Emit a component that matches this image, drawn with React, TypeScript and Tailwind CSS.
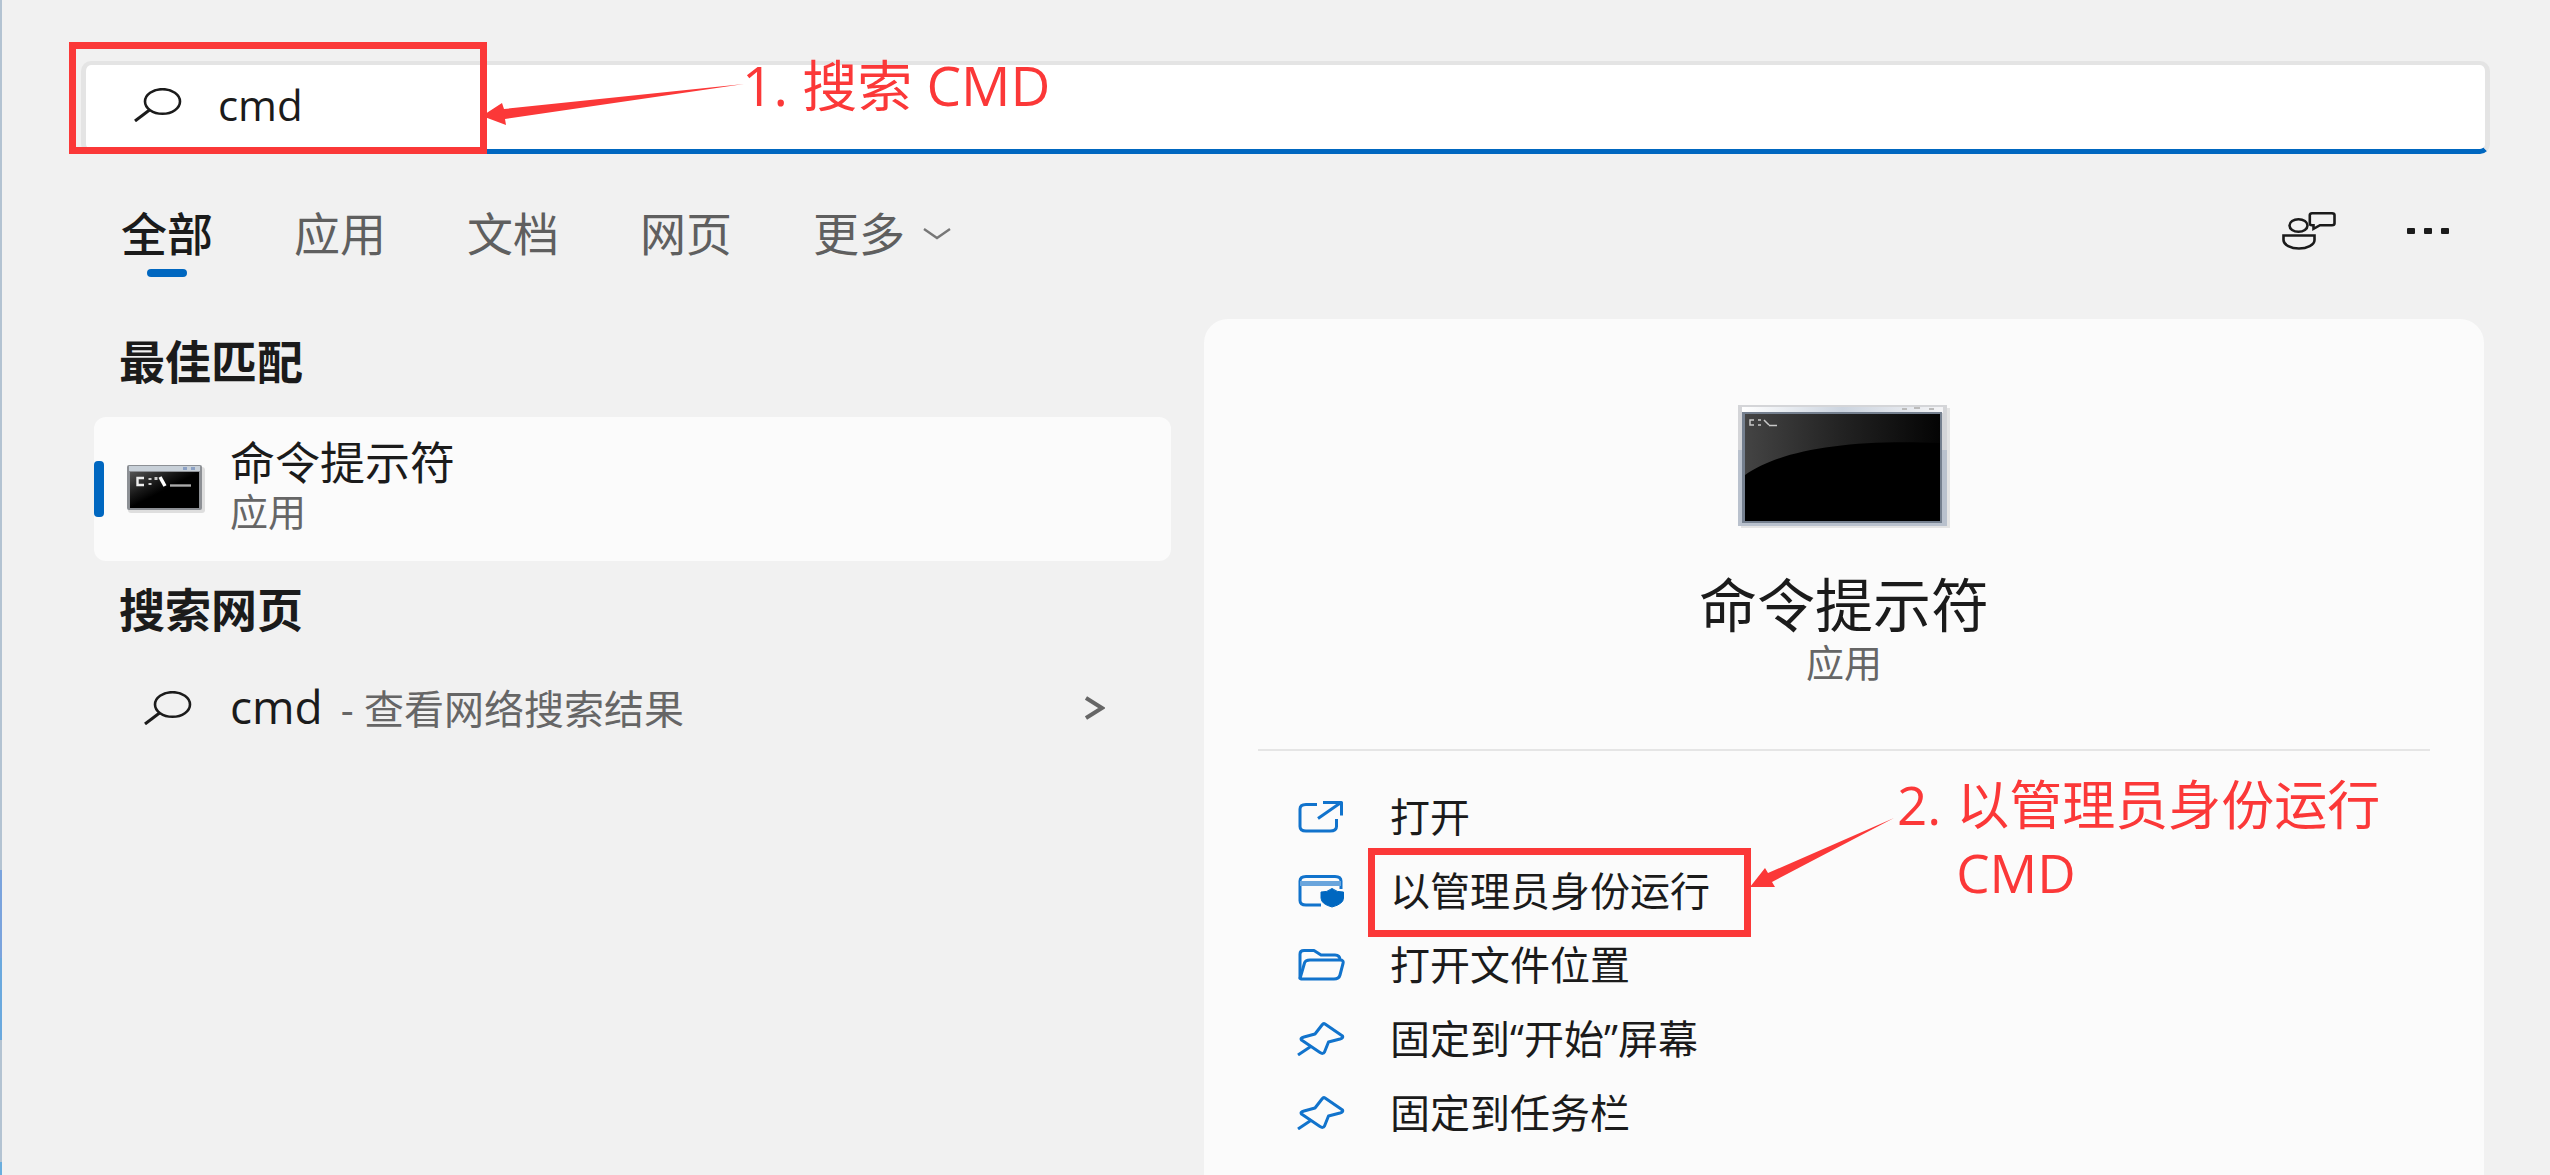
import type { ReactNode } from "react";

function SearchIcon() {
  return (
    <svg className="h-[34px] w-[48px] shrink-0" viewBox="0 0 48 34" fill="none" stroke="#1b1b1b" aria-hidden="true">
      <ellipse cx="28.5" cy="13.5" rx="17.5" ry="12.3" strokeWidth="2.6" />
      <path d="M15.500 22 L1 33" strokeWidth="3" />
    </svg>
  );
}

function FeedbackIcon() {
  return (
    <svg className="h-[38px] w-[54px]" viewBox="0 0 54 38" fill="none" stroke="#1b1b1b" strokeWidth="2.6" aria-hidden="true">
      <ellipse cx="16.5" cy="13.5" rx="9" ry="6.3" />
      <path d="M1.5 23.5 H32.5 V28 C32.5 33 25 36.5 17 36.5 C9 36.5 1.5 33 1.5 28 Z" />
      <path d="M30 1.3 H50 Q52.5 1.3 52.5 3 V11.5 Q52.5 13.2 50 13.2 H38 L31.5 16.8 V13.2 H30 Q27.8 13.2 27.8 11.5 V3 Q27.8 1.3 30 1.3 Z" />
    </svg>
  );
}

function MoreIcon() {
  return (
    <svg className="h-[8px] w-[44px]" viewBox="0 0 44 8" fill="#1b1b1b" aria-hidden="true">
      <rect x="1" y="1" width="8" height="6" rx="1" />
      <rect x="18" y="1" width="8" height="6" rx="1" />
      <rect x="35" y="1" width="8" height="6" rx="1" />
    </svg>
  );
}

function ActionIcon({ children }: { children: ReactNode }) {
  return (
    <svg className="h-[34px] w-[48px] shrink-0" viewBox="0 0 48 34" fill="none" stroke="#1173cc" strokeWidth="3" strokeLinejoin="round" aria-hidden="true">
      {children}
    </svg>
  );
}

const openIcon = (
  <ActionIcon>
    <path d="M20 4.5 H9 Q3 4.5 3 9 V26.5 Q3 31 9 31 H33 Q39.5 31 39.5 26.5 V19" />
    <path d="M21 18.5 L44 2.5 M26 2.5 H44.5 V15.5" />
  </ActionIcon>
);

const adminIcon = (
  <ActionIcon>
    <path d="M24 31 H9 Q3 31 3 26.5 V7 Q3 2.5 9 2.5 H38 Q44 2.5 44 7 V15" />
    <path d="M3 9.5 H44" stroke="#6aa5dc" strokeWidth="5" />
    <path d="M35 14.5 Q40 18.5 46.5 18 V24 Q46.5 30 35 33 Q24 30 24 24 V18 Q30 18.5 35 14.5 Z" fill="#0067c0" stroke="#0067c0" strokeWidth="1" />
  </ActionIcon>
);

const folderIcon = (
  <ActionIcon>
    <path d="M3 30.5 V6 Q3 2.5 7 2.5 H17 L24 7 H38 Q43 7 43 12" />
    <path d="M3 30.5 L7.5 15 Q8.5 12 13 12 H43 Q47 12 46 15.5 L43 27 Q42 31 37 31 H4 Z" />
  </ActionIcon>
);

const pinIcon = (
  <ActionIcon>
    <path d="M28 2 L45.5 14 Q46.5 16 43 17 L31.5 20 L27.5 30 Q26 32.5 23 30.5 L4.5 18 Q3 16 7 15 L18 12 L25 3 Q26.5 1 28 2 Z" />
    <path d="M14.5 24 L1 33" />
  </ActionIcon>
);

function ConsoleThumb() {
  return (
    <svg className="h-[48px] w-[78px]" viewBox="0 0 78 48" aria-hidden="true">
      <defs>
        <linearGradient id="thumbScreen" x1="0" y1="0" x2="1" y2="1">
          <stop offset="0" stopColor="#555" />
          <stop offset="0.35" stopColor="#161616" />
          <stop offset="0.5" stopColor="#000" />
        </linearGradient>
      </defs>
      <rect x="1" y="2" width="77" height="46" rx="3" fill="#dedede" />
      <rect x="0" y="0" width="75" height="45" rx="2" fill="#8d9095" />
      <rect x="2" y="1" width="71" height="5" fill="#c8d0d8" />
      <rect x="56" y="2" width="4" height="3" fill="#8ba0c4" />
      <rect x="64" y="2" width="4" height="3" fill="#8ba0c4" />
      <rect x="3" y="7" width="69" height="36" fill="url(#thumbScreen)" />
      <path d="M17 13 H10.5 V20 H17" fill="none" stroke="#eee" strokeWidth="2.4" />
      <path d="M23 13 V15 M23 18 V20 M29 12 V15" stroke="#ccc" strokeWidth="3" />
      <path d="M33 12 L38 21" stroke="#fff" strokeWidth="3.5" />
      <path d="M43 20.5 H64" stroke="#aaa" strokeWidth="2.4" />
    </svg>
  );
}

function ConsolePreview() {
  return (
    <svg className="h-[123px] w-[212px]" viewBox="0 0 212 123" role="img" aria-label="命令提示符">
      <defs>
        <linearGradient id="previewGloss" x1="0" y1="0" x2="1" y2="0">
          <stop offset="0" stopColor="#444" />
          <stop offset="0.5" stopColor="#222" />
          <stop offset="1" stopColor="#040404" />
        </linearGradient>
        <linearGradient id="previewTitle" x1="0" y1="0" x2="1" y2="0">
          <stop offset="0" stopColor="#fff" />
          <stop offset="0.5" stopColor="#ccd4df" />
          <stop offset="1" stopColor="#f4f4f6" />
        </linearGradient>
      </defs>
      <rect x="3" y="3" width="209" height="120" fill="#e4e4e4" />
      <rect x="0" y="0" width="209" height="121" fill="#d4d5d8" />
      <rect x="0" y="45" width="209" height="76" fill="#b9c1cd" />
      <rect x="4" y="2" width="201" height="6" fill="url(#previewTitle)" />
      <path d="M164 4 H169 M176 3 H182 M191 4 H196" stroke="#bbb" strokeWidth="2" />
      <rect x="4" y="7" width="200" height="111" fill="#75808f" />
      <rect x="7" y="9" width="195" height="107" fill="#000" />
      <path d="M7 9 H202 V38 C110 34 42 45 7 70 Z" fill="url(#previewGloss)" />
      <path d="M16 15 H12 V20 H16 M20 15 H23 M20 20 H23 M26 15 L31 20 M31 20.5 H39" stroke="#c8c8c8" strokeWidth="1.5" fill="none" />
    </svg>
  );
}

const tabs = ["应用", "文档", "网页"];

const actions = [
  { label: "打开", icon: openIcon, marked: false },
  { label: "以管理员身份运行", icon: adminIcon, marked: true },
  { label: "打开文件位置", icon: folderIcon, marked: false },
  { label: "固定到“开始”屏幕", icon: pinIcon, marked: false },
  { label: "固定到任务栏", icon: pinIcon, marked: false },
];

function SearchBar() {
  return (
    <form className="relative" onSubmit={(e) => e.preventDefault()}>
      <label className="flex h-[93px] items-center gap-[36px] rounded-[10px] border-x-[5px] border-t-[4px] border-b-[5px] border-x-[#e4e4e4] border-t-[#e4e4e4] border-b-[#0067c0] bg-white pb-[4px] pl-[48px]">
        <SearchIcon />
        <input
          type="text"
          aria-label="搜索"
          defaultValue="cmd"
          className="h-[60px] min-w-0 flex-1 bg-transparent text-[42px] leading-[60px] text-[#1b1b1b] outline-none"
        />
      </label>
      <div className="pointer-events-none absolute -top-[19px] -left-[12px] h-[112px] w-[418px] border-[7px] border-[#fb3838]" />
      <svg className="pointer-events-none absolute top-[21px] left-[401px] h-[44px] w-[264px]" viewBox="0 0 264 44" fill="#fb3838" aria-hidden="true">
        <path d="M0 34 L20 21 L22 27 L262 2 L23 37 L24 43 Z" />
      </svg>
      <p className="pointer-events-none absolute -top-[11px] left-[661px] text-[55px] leading-[70px] whitespace-nowrap text-[#fb3838]">
        1. 搜索 CMD
      </p>
    </form>
  );
}

function Tabs() {
  return (
    <nav className="flex h-[165px] items-center justify-between pr-[40px] pb-[7px] pl-[27px]">
      <div className="flex items-center gap-[81px] text-[46px] leading-[56px] text-[#5f5f5f]">
        <button type="button" className="relative font-medium text-[#1b1b1b]">
          全部
          <span className="absolute -bottom-[16px] left-1/2 h-[8px] w-[40px] -translate-x-1/2 rounded-full bg-[#0067c0]" />
        </button>
        {tabs.map((tab) => (
          <button key={tab} type="button">
            {tab}
          </button>
        ))}
        <button type="button" className="flex items-center gap-[18px]">
          更多
          <svg className="h-[14px] w-[28px]" viewBox="0 0 28 14" fill="none" stroke="#777" strokeWidth="2.4" aria-hidden="true">
            <path d="M1 3 L14 12 L27 3" />
          </svg>
        </button>
      </div>
      <div className="flex items-center gap-[70px] pb-[4px]">
        <button type="button" aria-label="反馈">
          <FeedbackIcon />
        </button>
        <button type="button" aria-label="更多选项">
          <MoreIcon />
        </button>
      </div>
    </nav>
  );
}

function Results() {
  return (
    <section>
      <h2 className="pt-[12px] pl-[25px] text-[46px] leading-[60px] font-bold text-[#1b1b1b]">最佳匹配</h2>
      <button type="button" className="relative mt-[26px] flex h-[144px] w-full items-center rounded-[12px] bg-[#fbfbfb] pl-[33px] text-left">
        <span className="absolute top-[44px] left-0 h-[56px] w-[10px] rounded-[4px] bg-[#0067c0]" />
        <ConsoleThumb />
        <span className="flex flex-col pb-[8px] pl-[25px]">
          <span className="text-[45px] leading-[52px] text-[#1b1b1b]">命令提示符</span>
          <span className="text-[38px] leading-[44px] text-[#666]">应用</span>
        </span>
      </button>
      <h2 className="pt-[18px] pl-[25px] text-[46px] leading-[60px] font-bold text-[#1b1b1b]">搜索网页</h2>
      <button type="button" className="mt-[29px] flex h-[80px] w-full items-center pr-[66px] pl-[50px] text-left">
        <SearchIcon />
        <span className="flex flex-1 items-baseline pb-[2px] pl-[38px] leading-[60px] text-[#666]">
          <span className="text-[46px] text-[#1b1b1b]">cmd</span>
          <span className="pl-[18px] text-[40px]">- 查看网络搜索结果</span>
        </span>
        <svg className="h-[24px] w-[20px]" viewBox="0 0 20 24" fill="none" stroke="#666" strokeWidth="4" aria-hidden="true">
          <path d="M1 2 L17 12 L1 22" />
        </svg>
      </button>
    </section>
  );
}

function Preview() {
  return (
    <section className="flex flex-col rounded-t-[24px] bg-[#fbfbfb] px-[54px] pt-[86px]">
      <div className="flex flex-col items-center">
        <ConsolePreview />
        <h1 className="mt-[42px] text-[58px] leading-[70px] text-[#1b1b1b]">命令提示符</h1>
        <p className="text-[38px] leading-[44px] text-[#666]">应用</p>
      </div>
      <hr className="mt-[65px] border-t-2 border-[#e5e5e5]" />
      <div className="relative pt-[29px]">
        <ul>
          {actions.map((action) => (
            <li key={action.label}>
              <button type="button" className="flex h-[74px] items-center gap-[45px] pl-[39px] text-[40px] leading-[56px] text-[#1b1b1b]">
                {action.icon}
                <span className="relative whitespace-nowrap">
                  {action.label}
                  {action.marked && (
                    <span className="pointer-events-none absolute -top-[15px] -left-[22px] h-[89px] w-[383px] border-[7px] border-[#fb3838]" />
                  )}
                </span>
              </button>
            </li>
          ))}
        </ul>
        <svg className="pointer-events-none absolute top-[66px] left-[491px] h-[72px] w-[148px]" viewBox="0 0 148 72" fill="#fb3838" aria-hidden="true">
          <path d="M1 70 L16 51 L19 56 L145 1 L23 65 L26 70 Z" />
        </svg>
        <p className="pointer-events-none absolute top-[20px] left-[639px] flex gap-[15px] text-[53px] leading-[68px] whitespace-nowrap text-[#fb3838]">
          <span>2.</span>
          <span>
            以管理员身份运行
            <br />
            CMD
          </span>
        </p>
      </div>
    </section>
  );
}

export default function App() {
  return (
    <main className="flex min-h-screen bg-[#f1f1f1] font-['Open_Sans','Noto_Sans_CJK_SC',sans-serif]">
      <div className="flex w-[2px] shrink-0 flex-col bg-[#b3c3d2]">
        <div className="flex-[870]" />
        <div className="flex-[88] bg-[#7aa3dd]" />
        <div className="flex-[82] bg-[#6aa9de]" />
        <div className="flex-[122]" />
        <div className="flex-[13] bg-[#6aaede]" />
      </div>
      <div className="flex min-w-0 flex-1 flex-col pt-[61px]">
        <div className="pr-[60px] pl-[79px]">
          <SearchBar />
        </div>
        <div className="pr-[60px] pl-[92px]">
          <Tabs />
        </div>
        <div className="grid flex-1 grid-cols-[1077fr_1280fr] gap-[33px] pr-[66px] pl-[92px]">
          <Results />
          <Preview />
        </div>
      </div>
    </main>
  );
}
